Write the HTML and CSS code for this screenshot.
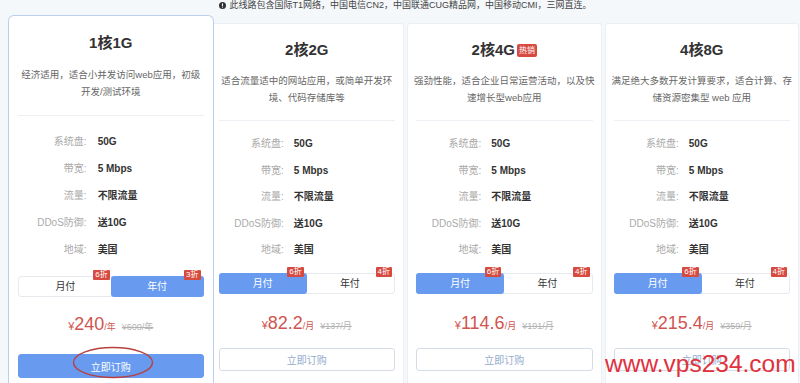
FILE: index.html
```html
<!DOCTYPE html>
<html>
<head>
    <meta charset="utf-8" />
    <title>云服务器套餐</title>
    <link rel="stylesheet" href="styles.css">
</head>
<body>
    <p class="notice">
        <svg class="notice-icon" viewBox="0 0 8 8" width="7" height="7"><circle cx="4" cy="4" r="4" fill="#333"/><rect x="3.4" y="1.6" width="1.2" height="3" fill="#fff"/><rect x="3.4" y="5.3" width="1.2" height="1.1" fill="#fff"/></svg>此线路包含国际T1网络，中国电信CN2，中国联通CUG精品网，中国移动CMI，三网直连。
    </p>

    <div class="plans">
        <div class="plan active">
            <div class="plan-head">
                <h3 class="plan-title">1核1G</h3>
                <p class="plan-desc">经济适用，适合小并发访问web应用，初级开发/测试环境</p>
            </div>
            <dl class="specs">
                <dt>系统盘:</dt><dd>50G</dd>
                <dt>带宽:</dt><dd>5 Mbps</dd>
                <dt>流量:</dt><dd>不限流量</dd>
                <dt>DDoS防御:</dt><dd>送10G</dd>
                <dt>地域:</dt><dd>美国</dd>
            </dl>
            <div class="tabs">
                <div class="tab">月付<span class="off">6折</span></div>
                <div class="tab on">年付<span class="off">3折</span></div>
            </div>
            <div class="price"><span class="cur">¥</span><span class="amount">240</span><span class="unit">/年</span><s class="old">¥600/年</s></div>
            <button class="buy">立即订购</button>
        </div>

        <div class="plan">
            <div class="plan-head">
                <h3 class="plan-title">2核2G</h3>
                <p class="plan-desc">适合流量适中的网站应用，或简单开发环境、代码存储库等</p>
            </div>
            <dl class="specs">
                <dt>系统盘:</dt><dd>50G</dd>
                <dt>带宽:</dt><dd>5 Mbps</dd>
                <dt>流量:</dt><dd>不限流量</dd>
                <dt>DDoS防御:</dt><dd>送10G</dd>
                <dt>地域:</dt><dd>美国</dd>
            </dl>
            <div class="tabs">
                <div class="tab on">月付<span class="off">6折</span></div>
                <div class="tab">年付<span class="off">4折</span></div>
            </div>
            <div class="price"><span class="cur">¥</span><span class="amount">82.2</span><span class="unit">/月</span><s class="old">¥137/月</s></div>
            <button class="buy">立即订购</button>
        </div>

        <div class="plan">
            <div class="plan-head">
                <h3 class="plan-title">2核4G<span class="hot">热销</span></h3>
                <p class="plan-desc">强劲性能，适合企业日常运营活动，以及快速增长型web应用</p>
            </div>
            <dl class="specs">
                <dt>系统盘:</dt><dd>50G</dd>
                <dt>带宽:</dt><dd>5 Mbps</dd>
                <dt>流量:</dt><dd>不限流量</dd>
                <dt>DDoS防御:</dt><dd>送10G</dd>
                <dt>地域:</dt><dd>美国</dd>
            </dl>
            <div class="tabs">
                <div class="tab on">月付<span class="off">6折</span></div>
                <div class="tab">年付<span class="off">4折</span></div>
            </div>
            <div class="price"><span class="cur">¥</span><span class="amount">114.6</span><span class="unit">/月</span><s class="old">¥191/月</s></div>
            <button class="buy">立即订购</button>
        </div>

        <div class="plan">
            <div class="plan-head">
                <h3 class="plan-title">4核8G</h3>
                <p class="plan-desc">满足绝大多数开发计算要求，适合计算、存储资源密集型 web 应用</p>
            </div>
            <dl class="specs">
                <dt>系统盘:</dt><dd>50G</dd>
                <dt>带宽:</dt><dd>5 Mbps</dd>
                <dt>流量:</dt><dd>不限流量</dd>
                <dt>DDoS防御:</dt><dd>送10G</dd>
                <dt>地域:</dt><dd>美国</dd>
            </dl>
            <div class="tabs">
                <div class="tab on">月付<span class="off">6折</span></div>
                <div class="tab">年付<span class="off">4折</span></div>
            </div>
            <div class="price"><span class="cur">¥</span><span class="amount">215.4</span><span class="unit">/月</span><s class="old">¥359/月</s></div>
            <button class="buy">立即订购</button>
        </div>
    </div>

    <!-- annotation + watermark on top of the screenshot -->
    <svg class="circle-mark" viewBox="0 0 82 33" width="82" height="33"><ellipse cx="41" cy="16.5" rx="39.5" ry="15" fill="none" stroke="#b8403f" stroke-width="1.4"/></svg>
    <div class="watermark">www.vps234.com</div>
</body>
</html>
```

FILE: styles.css
```css
body {
    margin: 0;
    height: 383px;
    overflow: hidden;
    background: #f5f8fb;
    font-family: "Liberation Sans", "Noto Sans CJK SC", sans-serif;
    color: #333;
    position: relative;
}

.notice {
    margin: 0;
    height: 12px;
    padding: 0 1px 0 12px;
    font-size: 9px;
    line-height: 11px;
    color: #444;
    text-align: center;
}

.notice-icon {
    vertical-align: -1px;
    margin-right: 3px;
}

.plans {
    display: grid;
    grid-template-columns: repeat(4, 1fr);
    column-gap: 3px;
    padding: 0 1px 0 12px;
    margin-top: 11px;
}

.plan {
    box-sizing: border-box;
    background: #fff;
    border: 1px solid #eceff3;
    border-bottom: 0;
    border-radius: 3px 3px 0 0;
    padding: 16px 8px 0;
    height: 360px;
}

.plan.active {
    position: relative;
    z-index: 1;
    margin: -8px -7px 0 -4px;
    padding: 17px 9px 0;
    border-color: #b9cfeb;
    border-radius: 6px 6px 0 0;
    height: 368px;
}

.plan-head {
    border-bottom: 1px solid #eceff3;
    padding-bottom: 14px;
    text-align: center;
}

.plan-title {
    margin: 0;
    font-size: 15px;
    line-height: 20px;
    font-weight: bold;
    color: #333;
}

.hot {
    display: inline-block;
    margin-left: 2px;
    padding: 0 2px;
    height: 13px;
    line-height: 13px;
    font-size: 8px;
    font-weight: normal;
    color: #fff;
    background: #d64a3f;
    border-radius: 2px;
    vertical-align: 2px;
}

.plan-desc {
    margin: 12px -3px 0;
    font-size: 9.5px;
    line-height: 17px;
    color: #666;
}

.active .plan-head {
    padding-bottom: 15px;
}

.active .plan-desc {
    margin: 13px 0 0;
}

.specs {
    display: grid;
    grid-template-columns: 37% 1fr;
    column-gap: 10px;
    margin: 10px 0 0;
    font-size: 10px;
}

.specs dt,
.specs dd {
    margin: 0;
    line-height: 26.5px;
}

.specs dt {
    text-align: right;
    color: #aaa;
}

.specs dd {
    font-weight: bold;
    color: #333;
}

.active .specs {
    margin-top: 12px;
    column-gap: 11px;
}

.active .specs dt,
.active .specs dd {
    line-height: 27px;
}

.tabs {
    display: flex;
    margin-top: 9.5px;
    border: 1px solid #e6e9ee;
    border-radius: 3px;
    height: 19px;
}

.active .tabs {
    margin-top: 13px;
}

.tab {
    flex: 1;
    position: relative;
    text-align: center;
    font-size: 10px;
    line-height: 19px;
    color: #333;
}

.tab.on {
    background: #689bf0;
    color: #fff;
    margin: -1px;
    border-radius: 3px;
    line-height: 21px;
}

.off {
    position: absolute;
    top: -7px;
    right: 2px;
    padding: 0 2px;
    height: 10px;
    line-height: 10px;
    font-size: 8px;
    color: #fff;
    background: #d64a3f;
    border-radius: 1px;
}

.tab.on .off {
    top: -6px;
    right: 3px;
}

.price {
    margin-top: 17px;
    line-height: 24px;
    text-align: center;
    color: #cf5550;
}

.active .price {
    margin-top: 15px;
}

.cur {
    font-size: 11px;
}

.amount {
    font-size: 18px;
}

.unit {
    font-size: 9px;
}

.old {
    margin-left: 6px;
    font-size: 9px;
    color: #b3b3b3;
}

.buy {
    display: block;
    width: 100%;
    height: 23px;
    margin-top: 10px;
    border: 1px solid #d5dce6;
    border-radius: 3px;
    background: #fff;
    font-family: inherit;
    font-size: 10px;
    color: #93abcc;
}

.active .buy {
    height: 24px;
    margin-top: 15px;
    border-color: #689bf0;
    background: #689bf0;
    color: #fff;
}

.circle-mark {
    position: absolute;
    left: 72px;
    top: 346px;
    z-index: 2;
}

.watermark {
    position: absolute;
    left: 605px;
    top: 352px;
    z-index: 2;
    font-size: 24.5px;
    line-height: 24.5px;
    color: #e0313c;
}
```
